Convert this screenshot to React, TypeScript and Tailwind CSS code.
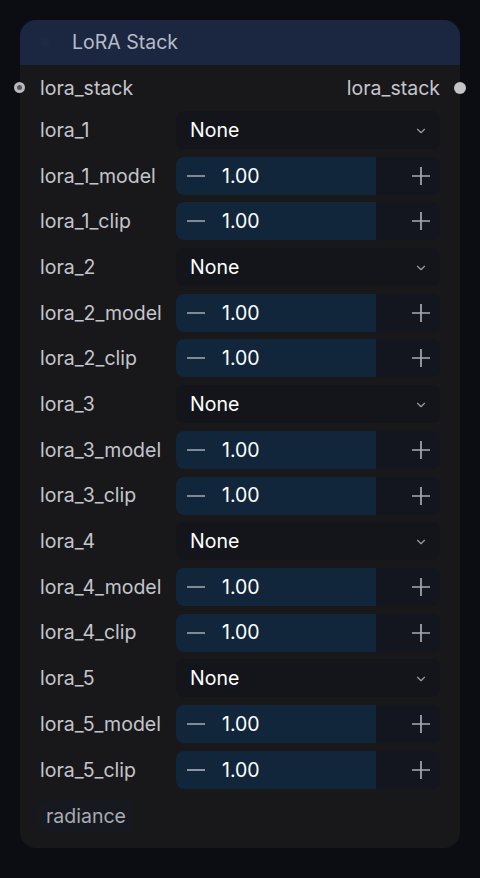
import { ChevronDown } from "lucide-react";

const LORAS = [1, 2, 3, 4, 5];

function Combo({ label }: { label: string }) {
  return (
    <div className="flex h-[38px] items-center">
      <div className="w-[156px] shrink-0 pl-[20px] pt-[1px] text-[#c4c6cc]">{label}</div>
      <div className="flex h-full w-[264px] items-center justify-between rounded-[8px] bg-[#14151b] pl-[14px] pr-[12px] pt-[1px] text-white">
        <span>None</span>
        <ChevronDown size={14} strokeWidth={2} className="text-[#9a9ca4]" />
      </div>
    </div>
  );
}

function Slider({ label }: { label: string }) {
  return (
    <div className="flex h-[38px] items-center">
      <div className="w-[156px] shrink-0 pl-[20px] pt-[1px] text-[#c4c6cc]">{label}</div>
      <div className="relative flex h-full w-[264px] items-center overflow-hidden rounded-[8px] bg-[#13161e]">
        <div className="absolute inset-y-0 left-0 w-[200px] bg-[#11263b]" />
        <svg width="18" height="18" viewBox="0 0 18 18" className="relative ml-[11px] text-[#a7abb3]">
          <path d="M0 9h18" stroke="currentColor" strokeWidth="1.7" />
        </svg>
        <span className="relative ml-[17px] pt-[1px] text-white">1.00</span>
        <svg width="18" height="18" viewBox="0 0 18 18" className="relative ml-auto mr-[10px] text-[#a7abb3]">
          <path d="M0 9h18M9 0v18" stroke="currentColor" strokeWidth="1.7" />
        </svg>
      </div>
    </div>
  );
}

export default function App() {
  return (
    <div
      className="min-h-[878px] w-[480px] bg-[#0b0d13] pt-[20px] text-[19.5px]"
      style={{ fontFamily: "Inter, 'Noto Sans', sans-serif" }}
    >
      <div className="ml-[20px] w-[440px] rounded-[16px] bg-[#18181b]">
        <div className="relative flex h-[45px] items-center rounded-t-[16px] bg-[#1b2741] pl-[52px] text-[#b7bcc7]">
          <span className="absolute left-[20px] top-[17px] h-[10px] w-[10px] rounded-full bg-[#1d2943]" />
          LoRA Stack
        </div>
        <div className="relative flex h-[46px] items-center justify-between px-[20px] pt-[1px] text-[#c4c6cc]">
          <span className="absolute left-[-6px] top-[17px] h-[11px] w-[11px] rounded-full border-[3px] border-[#b9b9bd] bg-[#55565c]" />
          <span>lora_stack</span>
          <span>lora_stack</span>
          <span className="absolute right-[-6px] top-[17px] h-[12px] w-[12px] rounded-full bg-[#c4c4c6]" />
        </div>
        <div className="flex flex-col gap-[7.7px]">
          {LORAS.map((n) => (
            <div key={n} className="contents">
              <Combo label={`lora_${n}`} />
              <Slider label={`lora_${n}_model`} />
              <Slider label={`lora_${n}_clip`} />
            </div>
          ))}
        </div>
        <div className="px-[18px] pb-[16px] pt-[11px]">
          <span className="inline-flex h-[32px] items-center rounded-[10px] bg-[#16191f] px-[8px] pt-[1px] text-[#a9acb3]">
            radiance
          </span>
        </div>
      </div>
    </div>
  );
}
